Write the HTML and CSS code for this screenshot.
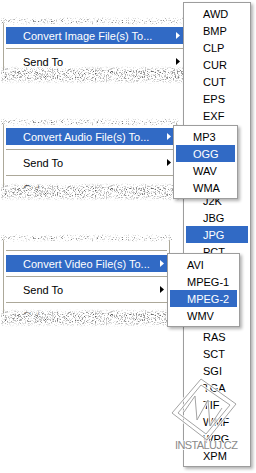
FILE: index.html
```html
<!DOCTYPE html>
<html lang="en">
<head>
    <meta charset="UTF-8">
    <meta name="viewport" content="width=device-width, initial-scale=1.0">
    <title>Convert File(s) To - context menus</title>
    <link rel="stylesheet" href="styles.css">
</head>
<body>
    <!-- Noise filters used for the torn edges of the menu clippings -->
    <svg class="defs" width="0" height="0" aria-hidden="true">
        <filter id="grain" x="0" y="0" width="1" height="1" color-interpolation-filters="sRGB">
            <feTurbulence type="fractalNoise" baseFrequency="0.9" numOctaves="2" seed="7" result="noise"/>
            <feColorMatrix in="noise" type="matrix" result="dots"
                values="0 -1.4 0 0 1.5  0 -1.4 0 0 1.5  0 -1.4 0 0 1.5  16 0 0 0 -8.6"/>
            <feMerge>
                <feMergeNode in="SourceGraphic"/>
                <feMergeNode in="dots"/>
            </feMerge>
        </filter>
        <filter id="grain-dense" x="0" y="0" width="1" height="1" color-interpolation-filters="sRGB">
            <feTurbulence type="fractalNoise" baseFrequency="0.9" numOctaves="2" seed="3" result="noise"/>
            <feColorMatrix in="noise" type="matrix" result="dots"
                values="0 -1.4 0 0 1.45  0 -1.4 0 0 1.45  0 -1.4 0 0 1.45  16 0 0 0 -7.9"/>
            <feMerge>
                <feMergeNode in="SourceGraphic"/>
                <feMergeNode in="dots"/>
            </feMerge>
        </filter>
    </svg>

    <div class="canvas">
        <!-- Three clippings of the Explorer context menu -->
        <div class="menus">
            <div class="fragment frag-image">
                <div class="menu">
                    <div class="item active"><span>Convert Image File(s) To...</span><i class="arrow"></i></div>
                    <div class="sep"></div>
                    <div class="item"><span>Send To</span><i class="arrow"></i></div>
                </div>
                <div class="grain grain-top"></div>
                <div class="grain grain-bottom"></div>
            </div>

            <div class="fragment frag-audio">
                <div class="menu">
                    <div class="item active"><span>Convert Audio File(s) To...</span><i class="arrow"></i></div>
                    <div class="sep"></div>
                    <div class="item"><span>Send To</span><i class="arrow"></i></div>
                    <div class="sep"></div>
                    <div class="item"><span>Cut</span></div>
                </div>
                <div class="grain grain-top"></div>
                <div class="grain grain-bottom"></div>
            </div>

            <div class="fragment frag-video">
                <div class="menu">
                    <div class="sep"></div>
                    <div class="item active"><span>Convert Video File(s) To...</span><i class="arrow"></i></div>
                    <div class="sep"></div>
                    <div class="item"><span>Send To</span><i class="arrow"></i></div>
                    <div class="sep"></div>
                    <div class="item"><span>Cut</span></div>
                </div>
                <div class="grain grain-top"></div>
                <div class="grain grain-bottom"></div>
            </div>
        </div>

        <!-- Image formats submenu -->
        <div class="popup formats">
            <div class="item">AWD</div>
            <div class="item">BMP</div>
            <div class="item">CLP</div>
            <div class="item">CUR</div>
            <div class="item">CUT</div>
            <div class="item">EPS</div>
            <div class="item">EXF</div>
            <div class="item">FAX</div>
            <div class="item">GIF</div>
            <div class="item">ICO</div>
            <div class="item">IFF</div>
            <div class="item">J2K</div>
            <div class="item">JBG</div>
            <div class="item active">JPG</div>
            <div class="item">PCT</div>
            <div class="item">PCX</div>
            <div class="item">PIC</div>
            <div class="item">PNG</div>
            <div class="item">PSD</div>
            <div class="item">RAS</div>
            <div class="item">SCT</div>
            <div class="item">SGI</div>
            <div class="item">TGA</div>
            <div class="item">TIF</div>
            <div class="item">WMF</div>
            <div class="item">WPG</div>
            <div class="item">XPM</div>
        </div>

        <!-- Audio formats submenu -->
        <div class="popup sub-audio">
            <div class="item">MP3</div>
            <div class="item active">OGG</div>
            <div class="item">WAV</div>
            <div class="item">WMA</div>
        </div>

        <!-- Video formats submenu -->
        <div class="popup sub-video">
            <div class="item">AVI</div>
            <div class="item">MPEG-1</div>
            <div class="item active">MPEG-2</div>
            <div class="item">WMV</div>
        </div>

        <!-- Site watermark -->
        <div class="watermark">
            <svg width="74" height="66" viewBox="0 0 74 66" aria-hidden="true">
                <g fill="none" stroke="#fff" stroke-width="3" opacity=".8">
                    <path d="M33 3 L68 28 L39 64 L4 37 Z"/>
                    <path d="M33 9 L62 29 L38 58 L10 37 Z"/>
                    <path d="M16 36 L27 20 L29 44 L40 24 L42 50 L54 32"/>
                </g>
                <g fill="none" stroke="#8c8c8c" stroke-width="1" opacity=".8">
                    <path d="M33 3 L68 28 L39 64 L4 37 Z"/>
                    <path d="M33 9 L62 29 L38 58 L10 37 Z"/>
                    <path d="M16 36 L27 20 L29 44 L40 24 L42 50 L54 32"/>
                </g>
            </svg>
            <span class="watermark-text">INSTALUJ.CZ</span>
        </div>
    </div>
</body>
</html>
```

FILE: styles.css
```css
/* Base */
* {
    box-sizing: border-box;
}

body {
    margin: 0;
    background: #fff;
    font-family: "Liberation Sans", Arial, sans-serif;
    font-size: 11px;
    color: #000;
}

.defs {
    position: absolute;
    width: 0;
    height: 0;
}

.canvas {
    position: relative;
    width: 256px;
    height: 473px;
    overflow: hidden;
}

/* Menu clippings on the left */
.menus {
    display: flex;
    flex-direction: column;
    align-items: flex-start;
    padding: 20px 0 0 3px;
}

.fragment {
    position: relative;
}

.frag-audio {
    margin-top: 49px;
}

.frag-video {
    margin-top: 48px;
}

.menu {
    overflow: hidden;
    background: #fff;
    border-left: 1px solid #aca899;
    border-right: 1px solid #aca899;
    padding: 7px 2px 0;
}

.frag-image .menu {
    width: 183px;
    height: 52px;
}

.frag-audio .menu {
    width: 174px;
    height: 68px;
}

.frag-video .menu {
    width: 167px;
    height: 78px;
    padding-top: 9px;
}

/* Menu rows */
.item {
    display: flex;
    align-items: center;
    justify-content: space-between;
    height: 17px;
    padding: 0 3px 0 17px;
    white-space: nowrap;
}

.item.active {
    background: #316ac5;
    color: #fff;
}

.arrow {
    width: 4px;
    height: 7px;
    background: currentColor;
    clip-path: polygon(0 0, 100% 50%, 0 100%);
}

.sep {
    height: 9px;
    padding-top: 4px;
}

.sep::before {
    content: "";
    display: block;
    height: 1px;
    background: #aca899;
}

/* Torn edges */
.grain {
    position: absolute;
    left: -2px;
    right: -2px;
    filter: url(#grain);
}

.grain-top {
    top: -3px;
    height: 8px;
    background: linear-gradient(#fff 35%, rgba(255, 255, 255, 0));
    -webkit-mask-image: linear-gradient(transparent, #000 35%, #000 65%, transparent);
    mask-image: linear-gradient(transparent, #000 35%, #000 65%, transparent);
}

.grain-bottom {
    bottom: -12px;
    height: 18px;
    filter: url(#grain-dense);
    background: linear-gradient(rgba(255, 255, 255, 0), #fff 40%);
    -webkit-mask-image: linear-gradient(transparent, #000 30%, #000 65%, transparent);
    mask-image: linear-gradient(transparent, #000 30%, #000 65%, transparent);
}

/* Open submenus */
.popup {
    position: absolute;
    background: #fff;
    border: 1px solid #9d9d9d;
    padding: 2px;
    box-shadow: 2px 2px 3px rgba(0, 0, 0, 0.3);
}

.popup .item {
    padding-right: 0;
}

.formats {
    left: 183px;
    top: 2px;
    width: 68px;
}

.sub-audio {
    left: 173px;
    top: 125px;
    width: 65px;
}

.sub-video {
    left: 167px;
    top: 253px;
    width: 73px;
}

/* Watermark */
.watermark {
    position: absolute;
    left: 168px;
    top: 376px;
    width: 76px;
    height: 80px;
}

.watermark svg {
    display: block;
}

.watermark-text {
    position: absolute;
    left: 7px;
    top: 63px;
    font-size: 11px;
    letter-spacing: -0.6px;
    color: #8a8a8a;
    text-shadow: 1px 0 0 #fff, -1px 0 0 #fff, 0 1px 0 #fff, 0 -1px 0 #fff;
}
```
